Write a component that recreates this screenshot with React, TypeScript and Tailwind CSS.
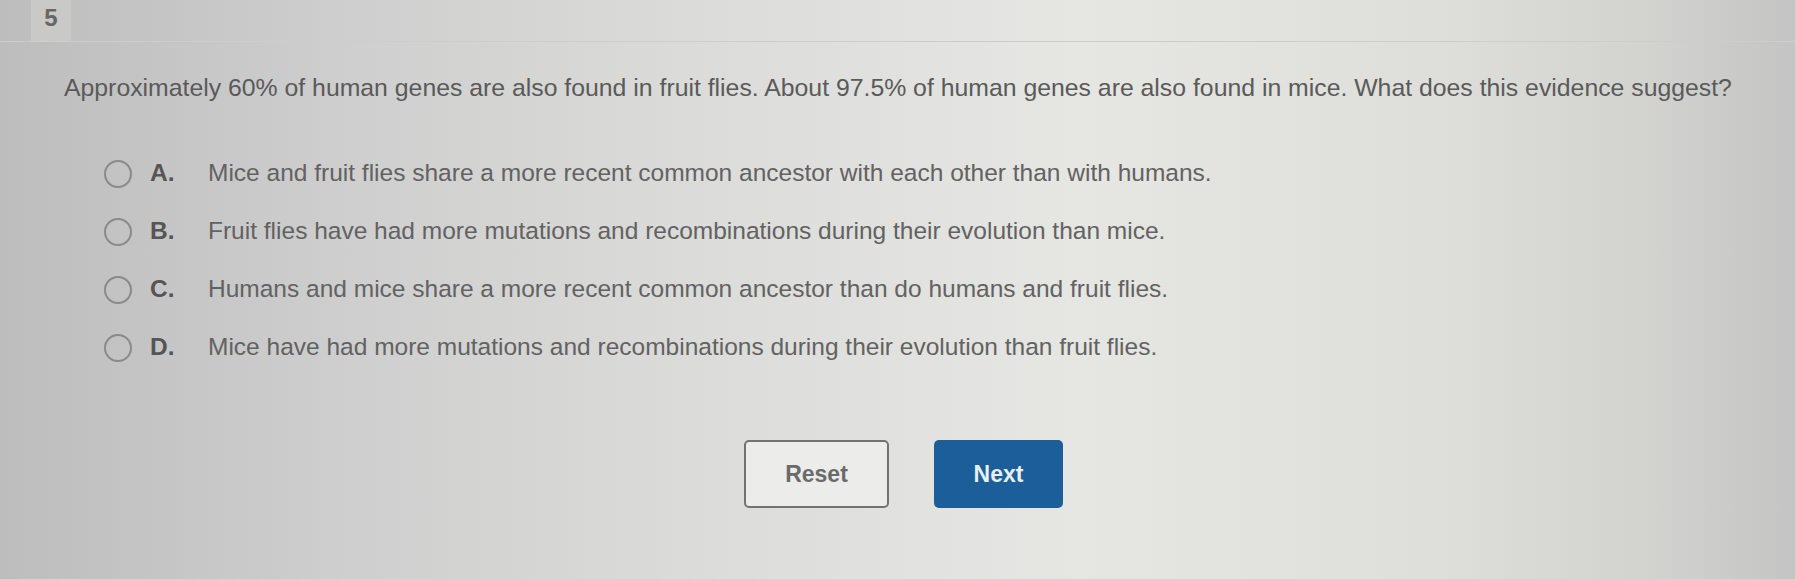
import { useState } from 'react'

const options = [
  { key: 'A', text: 'Mice and fruit flies share a more recent common ancestor with each other than with humans.' },
  { key: 'B', text: 'Fruit flies have had more mutations and recombinations during their evolution than mice.' },
  { key: 'C', text: 'Humans and mice share a more recent common ancestor than do humans and fruit flies.' },
  { key: 'D', text: 'Mice have had more mutations and recombinations during their evolution than fruit flies.' },
]

export default function App() {
  const [picked, setPicked] = useState<string | null>(null)

  return (
    <div
      className="w-full h-[579px] overflow-hidden text-[#5e5e5e] bg-[linear-gradient(to_right,#bdbdbd_0%,#cfcfcf_20%,#dcdcda_40%,#e6e6e3_60%,#dedfda_80%,#d2d3cf_92%,#c4c4c4_100%)]"
      style={{ fontFamily: '"Liberation Sans", Arial, sans-serif' }}
    >
      <div className="h-[42px] flex border-b border-[#cdcdcb]">
        <div className="w-[40px] ml-[31px] h-full bg-[#c9c9c7] flex justify-center pt-[4px] text-[24px] leading-[1.2] font-bold text-[#666]">5</div>
      </div>

      <p className="mt-[31px] pl-[64px] text-[24.8px] leading-[1.2] text-[#5a5a5a]">
        Approximately 60% of human genes are also found in fruit flies. About 97.5% of human genes are also found in mice. What does this evidence suggest?
      </p>

      <div className="mt-[42px] flex flex-col">
        {options.map(o => (
          <button
            key={o.key}
            onClick={() => setPicked(o.key)}
            className="h-[58px] flex items-center pl-[104px] text-left"
          >
            <span className="w-[28px] h-[28px] rounded-full border-[2.5px] border-[#8a8a8a] flex items-center justify-center shrink-0">
              {picked === o.key && <span className="w-[13px] h-[13px] rounded-full bg-[#1b5e99]" />}
            </span>
            <span className="ml-[18px] w-[58px] text-[24.5px] font-bold text-[#555]">{o.key}.</span>
            <span className="text-[24.5px] text-[#626262]">{o.text}</span>
          </button>
        ))}
      </div>

      <div className="mt-[63px] flex justify-center gap-[45px] pl-3">
        <button
          onClick={() => setPicked(null)}
          className="w-[145px] h-[68px] rounded-[5px] border-2 border-[#727272] bg-[#ececea] text-[23px] font-bold text-[#6a6a6a]"
        >
          Reset
        </button>
        <button className="w-[129px] h-[68px] rounded-[5px] bg-[#1b5e99] text-[23px] font-bold text-[#e6f0f6]">
          Next
        </button>
      </div>
    </div>
  )
}
